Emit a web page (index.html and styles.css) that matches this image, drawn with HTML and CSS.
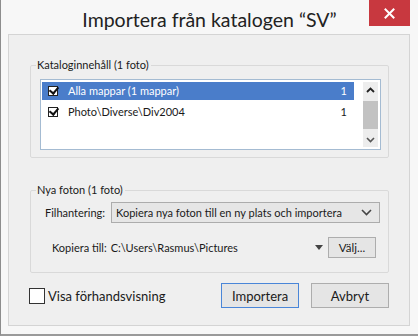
FILE: index.html
```html
<!DOCTYPE html>
<html lang="sv">
<head>
  <meta charset="UTF-8">
  <title>Importera från katalogen</title>
  <link rel="stylesheet" href="styles.css">
</head>
<body>
  <div class="window">
    <div class="titlebar">
      <span class="title">Importera från katalogen “SV”</span>
      <span class="close">
        <svg width="11" height="11" viewBox="0 0 11 11"><path d="M1.5 1.5 L9.5 9.5 M9.5 1.5 L1.5 9.5" stroke="#fff" stroke-width="2" stroke-linecap="square"/></svg>
      </span>
    </div>

    <div class="client">
      <fieldset class="group group-catalog">
        <legend>Kataloginnehåll (1 foto)</legend>
        <div class="listbox">
          <ul class="rows">
            <li class="row selected"><span class="check"></span><span class="name">Alla mappar (1 mappar)</span><span class="count">1</span></li>
            <li class="row"><span class="check"></span><span class="name">Photo\Diverse\Div2004</span><span class="count">1</span></li>
          </ul>
          <div class="scrollbar">
            <svg width="9" height="6" viewBox="0 0 9 6"><path d="M1 5 L4.5 1.5 L8 5" stroke="#222" stroke-width="1.8" fill="none"/></svg>
            <div class="thumb"></div>
            <svg width="9" height="6" viewBox="0 0 9 6"><path d="M1 1 L4.5 4.5 L8 1" stroke="#555" stroke-width="1.6" fill="none"/></svg>
          </div>
        </div>
      </fieldset>

      <fieldset class="group group-new">
        <legend>Nya foton (1 foto)</legend>
        <div class="field">
          <span class="label">Filhantering:</span>
          <div class="select">
            <span>Kopiera nya foton till en ny plats och importera</span>
            <svg width="11" height="7" viewBox="0 0 11 7"><path d="M1 1 L5.5 5.5 L10 1" stroke="#444" stroke-width="1.6" fill="none"/></svg>
          </div>
        </div>
        <div class="field field-path">
          <span class="label">Kopiera till:</span>
          <span class="path">C:\Users\Rasmus\Pictures</span>
          <span class="arrow"></span>
          <button class="btn btn-small">Välj...</button>
        </div>
      </fieldset>

      <div class="footer">
        <label class="preview"><span class="box"></span>Visa förhandsvisning</label>
        <button class="btn btn-default">Importera</button>
        <button class="btn">Avbryt</button>
      </div>
    </div>
  </div>
</body>
</html>
```

FILE: styles.css
```css
* {
    margin: 0;
    padding: 0;
    box-sizing: border-box;
}

body {
    background: #f6f6f6;
    font-family: Lato, "Open Sans", sans-serif;
    font-size: 11px;
    line-height: 14px;
    color: #1a1a1a;
}

ul {
    list-style: none;
}

.window {
    position: relative;
    width: 418px;
    height: 336px;
    background: #f7f7f7;
    border-left: 1px solid #8d8d8d;
    border-bottom: 2px solid #9a9a9a;
    display: flex;
    flex-direction: column;
}

.titlebar {
    height: 34px;
    flex: none;
    display: flex;
    align-items: center;
    justify-content: center;
    padding-top: 5px;
}

.title {
    font-size: 19.5px;
    line-height: 24px;
    color: #222;
}

.close {
    position: absolute;
    top: 0;
    right: 8px;
    width: 41px;
    height: 26px;
    background: #c8383f;
    display: flex;
    align-items: center;
    justify-content: center;
}

.client {
    margin: 0 8px 8px 7px;
    flex: 1;
    background: #efefef;
    border: 1px solid #d4d4d4;
    padding: 23px 20px 0 21px;
    display: flex;
    flex-direction: column;
}

.group {
    border: 1px solid #d9d9d9;
    border-radius: 2px;
}

.group legend {
    padding: 0 2px 0 1px;
}

.group-catalog {
    padding: 7px 7px 7px 9px;
}

.group-catalog legend {
    margin-left: -4px;
}

.listbox {
    display: flex;
    height: 71px;
    background: #fff;
    border: 1px solid #a4bbd2;
    padding: 2px 2px 2px 1px;
}

.rows {
    flex: 1;
}

.row {
    display: flex;
    align-items: center;
    height: 18px;
    margin-bottom: 3px;
    padding: 0 7px 0 6px;
}

.row.selected {
    background: #4a7dca;
    color: #fff;
}

.check {
    width: 10px;
    height: 10px;
    border: 1px solid #222;
    background: #fff;
    position: relative;
    margin-right: 10px;
}

.check::after {
    content: "";
    position: absolute;
    left: 2px;
    top: -2px;
    width: 4px;
    height: 7px;
    border: solid #111;
    border-width: 0 2px 2px 0;
    transform: rotate(40deg);
}

.name {
    flex: 1;
}

.count {
    width: 10px;
    text-align: right;
}

.scrollbar {
    width: 15px;
    margin-left: 9px;
    background: #ededed;
    display: flex;
    flex-direction: column;
    align-items: center;
    justify-content: space-between;
    padding: 5px 0 4px;
}

.thumb {
    width: 15px;
    height: 28px;
    background: #c2c2c2;
}

.group-new {
    margin-top: 25px;
    padding: 5px 8px 14px 14px;
}

.group-new legend {
    margin-left: -9px;
}

.field {
    display: flex;
    align-items: center;
}

.label {
    margin-right: 6px;
}

.select {
    flex: 1;
    height: 21px;
    display: flex;
    align-items: center;
    justify-content: space-between;
    padding: 0 7px 0 4px;
    background: #e6e6e6;
    border: 1px solid #acacac;
}

.field-path {
    margin-top: 14px;
    height: 21px;
    padding-left: 7px;
}

.field-path .label {
    margin-right: 4px;
}

.path {
    flex: 1;
}

.arrow {
    width: 0;
    height: 0;
    border-left: 4px solid transparent;
    border-right: 4px solid transparent;
    border-top: 5px solid #444;
    margin-right: 5px;
}

.btn {
    font-family: inherit;
    font-size: 11.5px;
    color: #1a1a1a;
    background: #e5e5e5;
    border: 1px solid #adadad;
    height: 21px;
}

.btn-small {
    width: 48px;
    margin-right: 4px;
}

.footer {
    display: flex;
    align-items: center;
    margin-top: 10px;
    margin-left: -1px;
}

.preview {
    display: flex;
    align-items: center;
    flex: 1;
    font-size: 13px;
}

.box {
    width: 16px;
    height: 16px;
    background: #fff;
    border: 1px solid #333;
    margin-right: 3px;
}

.footer .btn {
    width: 78px;
    height: 25px;
    font-size: 13px;
    margin-left: 12px;
}

.btn-default {
    border-color: #4a86d8;
}
```
